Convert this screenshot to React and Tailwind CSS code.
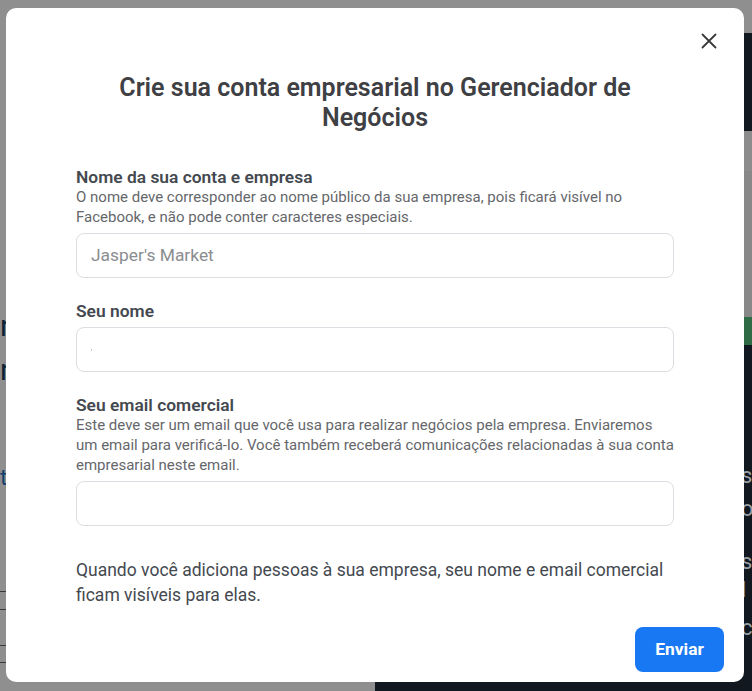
import React from "react";

function Field({ label, help, placeholder, dot }) {
  return (
    <div className="flex flex-col">
      <div className="text-[17.4px] leading-[20px] font-semibold text-[#444950]">{label}</div>
      {help && (
        <div className="text-[15px] leading-[20px] text-[#65676b]">
          {help.map((line, i) => (
            <span key={i} className="block whitespace-nowrap">{line}</span>
          ))}
        </div>
      )}
      <div className="mt-[6px] h-[45px] rounded-[8px] border border-[#dadde1] flex items-center px-[14px] text-[17.4px] text-[#8a8d91]">
        {placeholder}
        {dot && <span className="block w-px h-[2px] bg-[#c8c8c8]" />}
      </div>
    </div>
  );
}

export default function App() {
  return (
    <div
      className="relative w-[752px] h-[691px] overflow-hidden bg-[#8f8f8f]"
      style={{ fontFamily: "Roboto, 'Liberation Sans', sans-serif" }}
    >
      {/* dimmed background page */}
      <div className="flex h-full">
        <div className="w-[375px] relative">
          <div className="absolute left-0 top-[306px] text-[30px] leading-[40px] text-[#0d2233]">n</div>
          <div className="absolute left-0 top-[350px] text-[30px] leading-[40px] text-[#0d2233]">n</div>
          <div className="absolute left-0 top-[464px] text-[22px] leading-[28px] text-[#10406b]">t</div>
          <div className="absolute left-0 top-[591px] w-[20px] h-px bg-[#3a3a3a]" />
          <div className="absolute left-0 top-[609px] w-[20px] h-px bg-[#3a3a3a]" />
          <div className="absolute left-0 top-[645px] w-[20px] h-px bg-[#3a3a3a]" />
          <div className="absolute left-0 top-[662px] w-[20px] h-px bg-[#3a3a3a]" />
        </div>
        <div className="flex-1 mt-[33px] bg-[#111820] flex flex-col">
          <div className="h-[98px]" />
          <div className="h-[40px] bg-[#8c8c8c]" />
          <div className="h-[146px] bg-[#888888] border-l-[3px] border-[#4a4f55] ml-[366px]" />
          <div className="h-[28px] bg-[#2f6b45] ml-[366px]" />
          <div className="flex-1 relative">
            <div className="absolute left-[366px] top-[114px] text-[22px] text-[#9aa0a6]">s</div>
            <div className="absolute left-[366px] top-[147px] text-[22px] text-[#9aa0a6]">o</div>
            <div className="absolute left-[366px] top-[200px] text-[22px] text-[#9aa0a6]">s</div>
            <div className="absolute left-[366px] top-[228px] text-[22px] text-[#9aa0a6]">l</div>
            <div className="absolute left-[366px] top-[266px] text-[22px] text-[#9aa0a6]">c</div>
          </div>
        </div>
      </div>

      {/* modal */}
      <div className="absolute left-[6px] top-[8px] w-[738px] h-[674px] bg-white rounded-[10px] flex flex-col">
        <button className="absolute right-[27px] top-[25px] w-[16px] h-[16px] flex items-center justify-center">
          <svg width="16" height="16" viewBox="0 0 16 16" fill="none" stroke="#3a3a3a" strokeWidth="1.8" strokeLinecap="round">
            <path d="M1.5 1.5 L14.5 14.5 M14.5 1.5 L1.5 14.5" />
          </svg>
        </button>
        <h1 className="mt-[65px] px-[100px] text-center text-[25px] leading-[30px] font-semibold text-[#3e4044]">
          Crie sua conta empresarial no Gerenciador de Negócios
        </h1>
        <div className="mt-[34px] px-[70px] flex flex-col">
          <Field
            label="Nome da sua conta e empresa"
            help={[
              "O nome deve corresponder ao nome público da sua empresa, pois ficará visível no",
              "Facebook, e não pode conter caracteres especiais.",
            ]}
            placeholder="Jasper's Market"
          />
          <div className="mt-[23px]">
            <Field label="Seu nome" dot />
          </div>
          <div className="mt-[23px]">
            <Field
              label="Seu email comercial"
              help={[
                "Este deve ser um email que você usa para realizar negócios pela empresa. Enviaremos",
                "um email para verificá-lo. Você também receberá comunicações relacionadas à sua conta",
                "empresarial neste email.",
              ]}
            />
          </div>
          <p className="mt-[32px] text-[17.5px] leading-[25px] text-[#444950]">
            Quando você adiciona pessoas à sua empresa, seu nome e email comercial ficam visíveis para elas.
          </p>
        </div>
        <div className="mt-auto flex justify-end pr-[20px] pb-[10px]">
          <button className="w-[89px] h-[45px] rounded-[8px] bg-[#1877f2] text-white text-[17.4px] font-bold">
            Enviar
          </button>
        </div>
      </div>
    </div>
  );
}
